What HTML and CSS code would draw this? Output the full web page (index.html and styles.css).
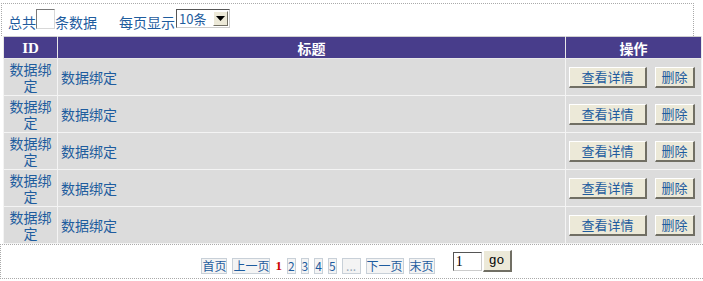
FILE: index.html
```html
<!DOCTYPE html>
<html lang="zh-CN">
<head>
  <meta charset="UTF-8" />
  <title>数据绑定</title>
  <link rel="stylesheet" href="styles.css">
</head>
<body>
  <div class="toolbar">
    <span>总共</span><span class="count-box"></span><span>条数据</span>
    <span class="per-page">每页显示</span>
    <span class="select">10条<span class="arrow"><svg width="9" height="5" viewBox="0 0 9 5"><path d="M0 0h9L4.5 5z" fill="#000"/></svg></span></span>
  </div>

  <table class="grid">
    <colgroup>
      <col class="col-id">
      <col class="col-title">
      <col class="col-ops">
    </colgroup>
    <thead>
      <tr>
        <th class="th-id">ID</th>
        <th>标题</th>
        <th>操作</th>
      </tr>
    </thead>
    <tbody>
      <tr>
        <td class="cell-id">数据绑定</td>
        <td class="cell-title">数据绑定</td>
        <td class="cell-ops"><button class="btn btn-view">查看详情</button><button class="btn btn-del">删除</button></td>
      </tr>
      <tr>
        <td class="cell-id">数据绑定</td>
        <td class="cell-title">数据绑定</td>
        <td class="cell-ops"><button class="btn btn-view">查看详情</button><button class="btn btn-del">删除</button></td>
      </tr>
      <tr>
        <td class="cell-id">数据绑定</td>
        <td class="cell-title">数据绑定</td>
        <td class="cell-ops"><button class="btn btn-view">查看详情</button><button class="btn btn-del">删除</button></td>
      </tr>
      <tr>
        <td class="cell-id">数据绑定</td>
        <td class="cell-title">数据绑定</td>
        <td class="cell-ops"><button class="btn btn-view">查看详情</button><button class="btn btn-del">删除</button></td>
      </tr>
      <tr>
        <td class="cell-id">数据绑定</td>
        <td class="cell-title">数据绑定</td>
        <td class="cell-ops"><button class="btn btn-view">查看详情</button><button class="btn btn-del">删除</button></td>
      </tr>
    </tbody>
  </table>

  <div class="pager">
    <div class="pages">
      <a class="page-link">首页</a>
      <a class="page-link">上一页</a>
      <span class="page-current">1</span>
      <a class="page-link num">2</a>
      <a class="page-link num">3</a>
      <a class="page-link num">4</a>
      <a class="page-link num">5</a>
      <a class="page-link dots">...</a>
      <a class="page-link">下一页</a>
      <a class="page-link">末页</a>
    </div>
    <div class="goto">
      <span class="goto-input">1</span>
      <button class="btn btn-go">go</button>
    </div>
  </div>
</body>
</html>
```

FILE: styles.css
```css
body {
  margin: 0;
  padding-top: 3px;
  font-family: "Noto Sans CJK SC", "DejaVu Sans", sans-serif;
  font-size: 14px;
  color: #1e5c9e;
  background-color: #fff;
}

.toolbar {
  box-sizing: border-box;
  width: 693px;
  height: 33px;
  margin-left: 1px;
  padding: 5px 0 0 6px;
  border: 1px dotted #aaa;
  border-bottom: none;
  display: flex;
  align-items: flex-start;
  line-height: 20px;
}

.toolbar span {
  padding-top: 3px;
}

.toolbar .count-box {
  box-sizing: border-box;
  width: 19px;
  height: 20px;
  padding: 0;
  border: 1px solid #d8d8d8;
  border-top-color: #7a7a7a;
  border-left-color: #7a7a7a;
}

.per-page {
  margin-left: 22px;
}

.toolbar .select {
  box-sizing: border-box;
  width: 54px;
  height: 19px;
  padding: 0 0 0 2px;
  margin-left: 1px;
  border: 1px solid #555;
  border-right-color: #ccc;
  border-bottom-color: #ccc;
  display: flex;
  justify-content: space-between;
  align-items: center;
  font-size: 13px;
  line-height: 17px;
}

.toolbar .arrow {
  box-sizing: border-box;
  width: 15px;
  height: 15px;
  padding: 0;
  margin-right: 1px;
  background-color: #ece9d8;
  border: 1px solid #fff;
  border-right-color: #716f64;
  border-bottom-color: #716f64;
  display: flex;
  align-items: center;
  justify-content: center;
}

.grid {
  width: 698px;
  margin-left: 3px;
  table-layout: fixed;
  border-collapse: collapse;
  border: 1px solid #a0a0a0;
  border-top-color: #d0d0d0;
}

.col-id { width: 54px; }
.col-title { width: 508px; }
.col-ops { width: 136px; }

.grid th {
  height: 21px;
  padding: 0;
  background-color: #483d8b;
  color: #fff;
  font-weight: bold;
  font-size: 14px;
  border: 1px solid #e8e8e8;
  border-top: none;
  line-height: 20px;
}

.grid .th-id {
  font-family: "Liberation Serif", "Noto Sans CJK SC", serif;
  font-size: 15px;
}

.grid td {
  height: 36px;
  padding: 0;
  background-color: #dcdcdc;
  border: 1px solid #f4f4f4;
}

.cell-id {
  text-align: center;
  line-height: 16px;
  padding: 0 3px !important;
}

.cell-title {
  padding-left: 3px !important;
}

.cell-ops {
  padding-left: 3px !important;
  white-space: nowrap;
}

.btn {
  box-sizing: border-box;
  height: 21px;
  padding: 0;
  margin: 0;
  font-family: "Noto Sans CJK SC", sans-serif;
  font-size: 13px;
  line-height: 18px;
  color: #1e5c9e;
  background-color: #ece9d8;
  border: 1px solid #fff;
  border-right: 2px solid #716f64;
  border-bottom: 2px solid #716f64;
  vertical-align: middle;
}

.btn-view {
  width: 78px;
}

.btn-del {
  width: 40px;
  margin-left: 8px;
}

.pager {
  box-sizing: border-box;
  width: 703px;
  height: 35px;
  border-top: 1px dotted #aaa;
  border-left: 1px dotted #aaa;
  border-bottom: 1px dotted #aaa;
  display: flex;
  justify-content: center;
  align-items: flex-start;
  padding-left: 9px;
}

.pages {
  display: flex;
  gap: 5px;
  margin-top: 13px;
  font-size: 12px;
  line-height: 14px;
}

.page-link {
  border: 1px solid #c8d0d8;
  background-color: #f4f4f4;
  padding: 0;
}

.page-link.dots {
  width: 17px;
  text-align: center;
  color: #9ab;
}

.page-current {
  color: #c00;
  font-weight: bold;
  font-family: "Liberation Serif", serif;
  font-size: 13px;
  padding-top: 1px;
}

.goto {
  display: flex;
  align-items: flex-start;
  margin-left: 18px;
  margin-top: 5px;
}

.goto-input {
  box-sizing: border-box;
  width: 29px;
  height: 19px;
  margin-top: 2px;
  padding-left: 2px;
  border: 1px solid #ccc;
  border-top-color: #555;
  border-left-color: #555;
  font-family: "Liberation Serif", serif;
  font-size: 14px;
  line-height: 17px;
  color: #000;
}

.btn-go {
  width: 29px;
  height: 22px;
  margin-left: 1px;
  font-family: "Liberation Mono", serif;
  font-size: 13px;
  font-weight: normal;
  color: #000;
}
```
